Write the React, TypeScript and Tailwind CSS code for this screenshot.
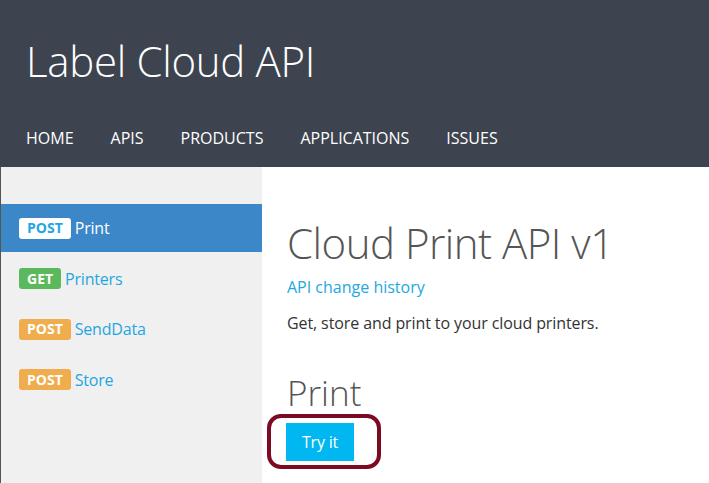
const navItems = ["HOME", "APIS", "PRODUCTS", "APPLICATIONS", "ISSUES"];

type Op = {
  method: "GET" | "POST";
  name: string;
  active?: boolean;
};

const ops: Op[] = [
  { method: "POST", name: "Print", active: true },
  { method: "GET", name: "Printers" },
  { method: "POST", name: "SendData" },
  { method: "POST", name: "Store" },
];

const Badge = ({ method, active }: { method: string; active?: boolean }) => {
  const color = active
    ? "bg-white text-[#1ea7e1]"
    : method === "GET"
    ? "bg-[#5cb85c] text-white"
    : "bg-[#f0ad4e] text-white";
  return (
    <span
      className={`inline-flex items-center justify-center h-[21px] px-[8px] rounded-[3px] text-[14px] font-bold leading-none ${color}`}
    >
      {method}
    </span>
  );
};

export default function App() {
  return (
    <div className="w-[709px] h-[483px] overflow-hidden bg-white font-['Open_Sans',sans-serif]">
      <header className="h-[167px] bg-[#3d4450] text-white px-[26px] flex flex-col">
        <h1 className="mt-[33px] text-[42px] font-light leading-[56px] tracking-[-0.3px]">
          Label Cloud API
        </h1>
        <nav className="mt-[39px] flex gap-[37px] text-[16px] leading-[20px]">
          {navItems.map((n) => (
            <span key={n}>{n}</span>
          ))}
        </nav>
      </header>
      <div className="flex h-[316px]">
        <aside className="w-[262px] bg-[#f0f0f0] border-l border-[#555] pt-[37px] flex flex-col gap-[2.5px]">
          {ops.map((op) => (
            <div
              key={op.name}
              className={`h-[48px] flex items-center gap-[4px] pl-[18px] text-[16px] ${
                op.active ? "bg-[#3b87c8] text-white" : "text-[#1ea7e1]"
              }`}
            >
              <Badge method={op.method} active={op.active} />
              <span className="tracking-[-0.2px]">{op.name}</span>
            </div>
          ))}
        </aside>
        <main className="flex-1 pl-[25px] text-[#333]">
          <h2 className="mt-[50px] text-[42px] font-light leading-[52px] text-[#555] tracking-[-0.5px]">
            Cloud Print API v1
          </h2>
          <a className="block mt-[8px] text-[16px] leading-[20px] text-[#1ea7e1]">
            API change history
          </a>
          <p className="mt-[16px] text-[16px] leading-[20px] tracking-[-0.1px]">
            Get, store and print to your cloud printers.
          </p>
          <h3 className="mt-[40px] text-[35px] font-light leading-[40px] text-[#555]">
            Print
          </h3>
          <div className="relative mt-[10px] ml-[-1px]">
            <button className="h-[38px] w-[68px] bg-[#00b7f1] text-white text-[16px] tracking-[-0.2px]">
              Try it
            </button>
            <div className="absolute left-[-19px] top-[-9px] w-[114px] h-[55px] border-[4px] border-[#7d0a23] rounded-[14px]" />
          </div>
        </main>
      </div>
    </div>
  );
}
